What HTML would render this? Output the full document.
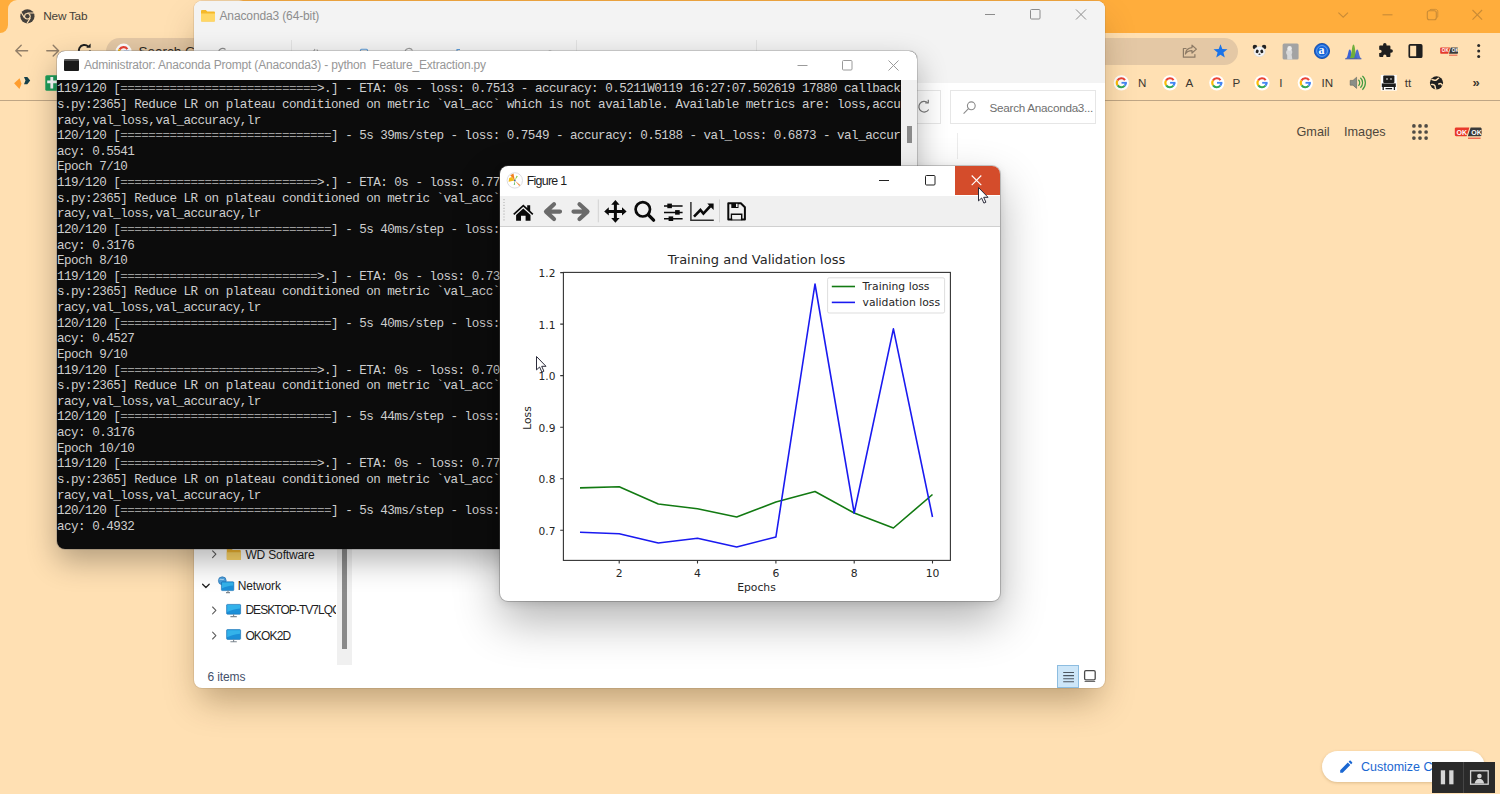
<!DOCTYPE html>
<html lang="en">
<head>
<meta charset="utf-8">
<title>New Tab</title>
<style>
*{box-sizing:border-box;margin:0;padding:0}
html,body{width:1500px;height:794px;overflow:hidden}
body{position:relative;background:#ffe0b3;font-family:"Liberation Sans",sans-serif;color:#222}
.abs{position:absolute}
.t{position:absolute;white-space:pre;line-height:1}
/* chrome */
#tabstrip{left:0;top:0;width:1500px;height:33px;background:#ffad3c}
#tab{left:8px;top:0;width:240px;height:33px;background:#ffe0b3;border-radius:9px 9px 0 0}
#toolbar{left:0;top:33px;width:1500px;height:68px;background:#ffe0b3}
#omni{left:106px;top:37.5px;width:1131.5px;height:27px;border-radius:13.5px;background:#e4c8a5}
#bmline{left:0;top:100px;width:1500px;height:1px;background:#bfa685}
.bm{font-size:11.600px;color:#3b3630}
.pg{font-size:12.7px;color:#4e473c}
/* explorer */
#exp{left:194px;top:1px;width:911px;height:687px;background:#fff;border-radius:8px;box-shadow:0 18px 34px -6px rgba(70,45,10,.36),0 0 0 1px rgba(150,120,80,.16);overflow:hidden}
#exphead{left:0;top:0;width:911px;height:82px;background:#f3f3f3}
.nav{font-size:12px;color:#1f1f1f;letter-spacing:-0.15px}
/* terminal */
#term{left:57px;top:51px;width:860px;height:498px;background:#0c0c0c;border-radius:8px;box-shadow:0 12px 30px rgba(0,0,0,.30),0 0 0 1px rgba(120,120,120,.28);overflow:hidden}
#termtitle{left:0;top:0;width:860px;height:29px;background:#fff}
#termscroll{left:844px;top:29px;width:16px;height:470px;background:#f0f0f0}
#termtext{left:0;top:31.3px;font-family:"Liberation Mono",monospace;font-size:12.6px;letter-spacing:-0.53px;line-height:15.62px;color:#cecece;white-space:pre}
.eq{color:#9c9c9c}
/* figure */
#fig{left:500px;top:166px;width:500px;height:435px;background:#fff;border-radius:8px;box-shadow:0 20px 46px rgba(0,0,0,.30),0 2px 8px rgba(0,0,0,.12),0 0 0 1px rgba(110,110,110,.32);overflow:hidden}
#figtool{left:0;top:29.500px;width:500px;height:31.500px;background:#f0f0f0;border-bottom:1px solid #d0d0d0}
#figclose{left:455px;top:0;width:45px;height:28.600px;background:#d44c2b}
</style>
</head>
<body>
<!-- CHROME -->
<div id="tabstrip" class="abs"></div>
<div id="tab" class="abs"></div>
<div class="abs" style="left:0;top:24px;width:9px;height:9px;background:#ffe0b3"></div><div class="abs" style="left:0;top:0;width:8px;height:33px;background:#ffad3c;border-radius:0 0 8px 0"></div>
<div id="toolbar" class="abs"></div>
<div id="omni" class="abs"></div>
<div id="bmline" class="abs"></div>
<div id="chrome-items">
<svg class="abs" style="left:0;top:0" width="1500" height="160" viewBox="0 0 1500 160" fill="none">
<g stroke="#c98b36" stroke-width="1.1"><path d="M1338.4 12.6l4.8 4.6 4.8-4.6"/><path d="M1382.5 14.8h10"/><rect x="1427.300" y="10.800" width="9" height="9" rx="2"/><path d="M1429.400 10.600c.2-.8.800-1.200 1.600-1.200h4.600c1.300 0 2.200.9 2.200 2.200v4.600c0 .800-.4 1.400-1.200 1.600" stroke-width=".9"/><path d="M1472.5 10l9.6 9.6M1482.1 10l-9.6 9.6"/></g>
<circle cx="27.4" cy="16.3" r="7.1" fill="#45413c"/><circle cx="27.4" cy="16.3" r="3.3" fill="#ffe0b3"/><circle cx="27.4" cy="16.3" r="2.2" fill="#45413c"/><path d="M27.4 13h6.6M24.5 17.9l-3.4-5.7M30.3 17.9l-3.3 5.5" stroke="#ffe0b3" stroke-width="1.1"/>
<g stroke="#927f69" stroke-width="1.4" stroke-linecap="round" stroke-linejoin="round"><path d="M27.6 50.7H16M21.2 45.3l-5.4 5.4 5.4 5.4"/><path d="M46.8 50.7h11.6M53.2 45.3l5.4 5.4-5.4 5.4"/></g>
<g stroke="#1f1f1f" stroke-width="2"><path d="M90 50.6a5.6 5.6 0 1 1-1.7-4"/><path d="M90.6 43.4v4.4h-4.4z" fill="#1f1f1f" stroke="none"/></g>
<circle cx="123.6" cy="51.6" r="8" fill="#fff"/><g transform="translate(0 .9)"><path d="M127.37 48.16A4.6 4.6 0 0 0 119.62 48.50" stroke="#ea4335" stroke-width="2.2" fill="none"/><path d="M119.62 48.50A4.6 4.6 0 0 0 119.83 53.44" stroke="#fbbc05" stroke-width="2.2" fill="none"/><path d="M119.83 53.44A4.6 4.6 0 0 0 127.12 53.76" stroke="#34a853" stroke-width="2.2" fill="none"/><path d="M127.12 53.76A4.6 4.6 0 0 0 128.20 50.80" stroke="#4285f4" stroke-width="2.2" fill="none"/><path d="M123.80 50.80H129.30" stroke="#4285f4" stroke-width="1.9" fill="none"/></g>
<g stroke="#8c7a65" stroke-width="1.2" stroke-linejoin="round" stroke-linecap="round"><path d="M1186 48.5h-2.6v8.7h11.5v-2.6"/><path d="M1192 45.2l4.4 3.9-4.4 3.9v-2.4c-3.4 0-5.4 1-6.6 3.4.3-3.8 2.4-6 6.6-6.4z"/></g>
<polygon points="1220.5,44.2 1222.3,49.1 1227.5,49.3 1223.4,52.6 1224.8,57.6 1220.5,54.7 1216.2,57.6 1217.6,52.6 1213.5,49.3 1218.7,49.1" fill="#1a73e8"/>
<g transform="translate(1259.500 51.400) scale(.860) translate(-1259.500 -51.400)"><circle cx="1254.2" cy="46.2" r="2.6" fill="#222"/><circle cx="1264.8" cy="46.2" r="2.6" fill="#222"/><ellipse cx="1259.5" cy="51.6" rx="6.6" ry="6" fill="#f4f4f4" stroke="#cfcfcf" stroke-width=".5"/><ellipse cx="1256.8" cy="51.4" rx="1.7" ry="2.1" fill="#222" transform="rotate(20 1256.8 51.4)"/><ellipse cx="1262.2" cy="51.4" rx="1.7" ry="2.1" fill="#222" transform="rotate(-20 1262.2 51.4)"/><ellipse cx="1259.5" cy="54.6" rx="1.2" ry=".8" fill="#222"/></g>
<rect x="1282.6" y="43.4" width="16" height="16" rx="1.5" fill="#a3a3a3"/><path d="M1287.2 59.4v-4.2c-1.4-1.6-1.6-4 .2-5.4.4-1.8 3-2 3.6-.2 1.6 1 1.6 3.4.6 4.8l.8 5z" fill="#d9d9d9"/><circle cx="1289.6" cy="48.4" r="2.3" fill="#ececec"/>
<circle cx="1322" cy="51" r="7.6" fill="#1565d8" stroke="#0b3f9c" stroke-width=".8"/><circle cx="1322" cy="51" r="5.4" fill="none" stroke="#8fb8f5" stroke-width=".7"/>
<path d="M1345.6 58.6c2.6-.4 2.4-9 4.2-9s1.6 8.600 4.200 9z" fill="#3b62d6"/><path d="M1349.300 58.600c2.400-.5 2.400-14 4.200-14s1.800 13.500 4.200 14z" fill="#6fae3c"/><path d="M1353.200 58.600c2.400-.4 2.200-9 4-9s1.800 8.600 4.400 9z" fill="#3b62d6" fill-opacity=".9"/><path d="M1345.200 58.800h16.200" stroke="#2c4aa8" stroke-width=".9"/>
<path transform="translate(1384.800 51) scale(.920) translate(-1385.200 -51.200)" d="M1383.300 44.400a1.900 1.900 0 0 1 3.800 0v.8h3.200c.6 0 1 .4 1 1v3.200h.8a1.900 1.900 0 0 1 0 3.800h-.8v3.500c0 .6-.4 1-1 1h-3.300v-.9a1.800 1.800 0 0 0-3.600 0v.9h-3.300c-.6 0-1-.4-1-1v-3.300h.9a1.800 1.800 0 0 0 0-3.600h-.9v-3.600c0-.6.4-1 1-1h3.200z" fill="#1f1f1f"/>
<rect x="1409.300" y="44.800" width="12.400" height="12.400" rx="1" stroke="#1f1f1f" stroke-width="1.700"/><rect x="1416.200" y="44.800" width="5.500" height="12.400" fill="#1f1f1f"/>
<path d="M1441.200 47.400h8.800l-1.800 6.400h-7c-.6 0-1-.4-1-1v-4.400c0-.6.400-1 1-1z" fill="#e53b2c"/><path d="M1450.800 47.400h6.200c.6 0 1 .4 1 1v4.400c0 .6-.4 1-1 1h-8z" fill="#3a3a3a"/><path d="M1449 55.200h8.400" stroke="#e53b2c" stroke-width=".8"/>
<circle cx="1478.700" cy="45.600" r="1.500" fill="#2a2a2a"/><circle cx="1478.700" cy="51" r="1.500" fill="#2a2a2a"/><circle cx="1478.700" cy="56.400" r="1.500" fill="#2a2a2a"/>
<path d="M14.100 83.300L19.600 78.200 21.500 83.800 19.400 88.900z" fill="#ff9d2e"/><path d="M24 76.900h3.300l2.900 3.700-2.900 3.700H24l1.500-3.700z" fill="#16414b"/>
<rect x="45.300" y="75.300" width="14" height="15.400" rx="1.500" fill="#1e9e5a"/><path d="M51.800 77v11.400M47.200 81.800h9.800" stroke="#fff" stroke-width="2.800"/>
<circle cx="1121.3" cy="82.8" r="7.6" fill="#fff"/><path d="M1124.99 80.22A4.5 4.5 0 0 0 1117.40 80.55" stroke="#ea4335" stroke-width="2.1" fill="none"/><path d="M1117.40 80.55A4.5 4.5 0 0 0 1117.61 85.38" stroke="#fbbc05" stroke-width="2.1" fill="none"/><path d="M1117.61 85.38A4.5 4.5 0 0 0 1124.75 85.69" stroke="#34a853" stroke-width="2.1" fill="none"/><path d="M1124.75 85.69A4.5 4.5 0 0 0 1125.80 82.80" stroke="#4285f4" stroke-width="2.1" fill="none"/><path d="M1121.50 82.80H1126.85" stroke="#4285f4" stroke-width="1.8" fill="none"/>
<circle cx="1169.9" cy="82.8" r="7.6" fill="#fff"/><path d="M1173.59 80.22A4.5 4.5 0 0 0 1166.00 80.55" stroke="#ea4335" stroke-width="2.1" fill="none"/><path d="M1166.00 80.55A4.5 4.5 0 0 0 1166.21 85.38" stroke="#fbbc05" stroke-width="2.1" fill="none"/><path d="M1166.21 85.38A4.5 4.5 0 0 0 1173.35 85.69" stroke="#34a853" stroke-width="2.1" fill="none"/><path d="M1173.35 85.69A4.5 4.5 0 0 0 1174.40 82.80" stroke="#4285f4" stroke-width="2.1" fill="none"/><path d="M1170.10 82.80H1175.45" stroke="#4285f4" stroke-width="1.8" fill="none"/>
<circle cx="1216.8" cy="82.8" r="7.6" fill="#fff"/><path d="M1220.49 80.22A4.5 4.5 0 0 0 1212.90 80.55" stroke="#ea4335" stroke-width="2.1" fill="none"/><path d="M1212.90 80.55A4.5 4.5 0 0 0 1213.11 85.38" stroke="#fbbc05" stroke-width="2.1" fill="none"/><path d="M1213.11 85.38A4.5 4.5 0 0 0 1220.25 85.69" stroke="#34a853" stroke-width="2.1" fill="none"/><path d="M1220.25 85.69A4.5 4.5 0 0 0 1221.30 82.80" stroke="#4285f4" stroke-width="2.1" fill="none"/><path d="M1217.00 82.80H1222.35" stroke="#4285f4" stroke-width="1.8" fill="none"/>
<circle cx="1262" cy="82.8" r="7.6" fill="#fff"/><path d="M1265.69 80.22A4.5 4.5 0 0 0 1258.10 80.55" stroke="#ea4335" stroke-width="2.1" fill="none"/><path d="M1258.10 80.55A4.5 4.5 0 0 0 1258.31 85.38" stroke="#fbbc05" stroke-width="2.1" fill="none"/><path d="M1258.31 85.38A4.5 4.5 0 0 0 1265.45 85.69" stroke="#34a853" stroke-width="2.1" fill="none"/><path d="M1265.45 85.69A4.5 4.5 0 0 0 1266.50 82.80" stroke="#4285f4" stroke-width="2.1" fill="none"/><path d="M1262.20 82.80H1267.55" stroke="#4285f4" stroke-width="1.8" fill="none"/>
<circle cx="1305.3" cy="82.8" r="7.6" fill="#fff"/><path d="M1308.99 80.22A4.5 4.5 0 0 0 1301.40 80.55" stroke="#ea4335" stroke-width="2.1" fill="none"/><path d="M1301.40 80.55A4.5 4.5 0 0 0 1301.61 85.38" stroke="#fbbc05" stroke-width="2.1" fill="none"/><path d="M1301.61 85.38A4.5 4.5 0 0 0 1308.75 85.69" stroke="#34a853" stroke-width="2.1" fill="none"/><path d="M1308.75 85.69A4.5 4.5 0 0 0 1309.80 82.80" stroke="#4285f4" stroke-width="2.1" fill="none"/><path d="M1305.50 82.80H1310.85" stroke="#4285f4" stroke-width="1.8" fill="none"/>
<path d="M1350.200 80.400h2.800l3.600-3.200v11.200l-3.600-3.200h-2.800z" fill="#8a8f88" stroke="#5d625c" stroke-width=".6"/><g stroke="#3f9a3f" stroke-width="1.200"><path d="M1358.400 79.800a4 4 0 0 1 0 6"/><path d="M1360.400 77.800a6.800 6.800 0 0 1 0 10"/><path d="M1362.400 75.900a9.500 9.500 0 0 1 0 13.800"/></g>
<rect x="1380.800" y="75" width="16" height="15.600" fill="#fff"/><rect x="1383.200" y="75.600" width="11.200" height="7.400" rx="1" fill="#1d1d1d"/><path d="M1386 79h2M1390 79h2" stroke="#fff" stroke-width=".9"/><path d="M1381.800 83.400h14v3.600h-14z" fill="#1d1d1d"/><path d="M1383.200 87v3M1394.400 87v3M1385.500 88.600h6.600" stroke="#1d1d1d" stroke-width="1.300"/>
<circle cx="1436.500" cy="82.800" r="6.600" fill="#1f1f1f"/><path d="M1432 79.600c1.600.2 2.400 1 3.800.6 1.400-.4 1.400-1.800 2.800-2M1431.600 84.400c1.400.4 2.400 0 3.200 1.200.8 1.200 0 2.600 1 3.400M1438.800 84c1-.6 2.600-.2 3.400 1" stroke="#ffe0b3" stroke-width="1.500" stroke-linecap="round"/>
<circle cx="1413.9" cy="125.9" r="1.85" fill="#4f4b45"/><circle cx="1413.9" cy="132.0" r="1.85" fill="#4f4b45"/><circle cx="1413.9" cy="138.1" r="1.85" fill="#4f4b45"/><circle cx="1420.0" cy="125.9" r="1.85" fill="#4f4b45"/><circle cx="1420.0" cy="132.0" r="1.85" fill="#4f4b45"/><circle cx="1420.0" cy="138.1" r="1.85" fill="#4f4b45"/><circle cx="1426.1" cy="125.9" r="1.85" fill="#4f4b45"/><circle cx="1426.1" cy="132.0" r="1.85" fill="#4f4b45"/><circle cx="1426.1" cy="138.1" r="1.85" fill="#4f4b45"/>
<path d="M1456.200 127.400h13.200l-2.800 8.800h-10.400c-.8 0-1.400-.6-1.400-1.400v-6c0-.8.600-1.400 1.400-1.400z" fill="#e8392b"/><path d="M1470.600 127.400h9.600c.8 0 1.400.6 1.400 1.400v6c0 .8-.6 1.400-1.400 1.400h-12.400z" fill="#3a3a3a"/><path d="M1468 138.200h12.600" stroke="#e8392b" stroke-width="1"/>
</svg>
<div class="t" id="tabtt" style="left:43.300px;top:10.800px;font-size:11.8px;color:#453f38;letter-spacing:-0.25px">New Tab</div>
<div class="t" style="left:138.500px;top:44.700px;font-size:13.500px;color:#2b2621">Search Google or type a URL</div>
<div class="t" style="left:1318.600px;top:43.600px;font-family:'Liberation Serif',serif;font-weight:bold;font-size:12px;color:#fff">a</div>
<div class="t" style="left:1441.700px;top:48.500px;font-size:4.500px;font-weight:bold;color:#fff;letter-spacing:.2px">OK  OK</div>
<div class="t" style="left:1456.500px;top:128.500px;font-size:7px;font-weight:bold;color:#fff;letter-spacing:.1px">OK  OK</div>
<div class="t bm" style="left:1138px;top:77px">N</div>
<div class="t bm" style="left:1185.4px;top:77px">A</div>
<div class="t bm" style="left:1232.4px;top:77px">P</div>
<div class="t bm" style="left:1279.2px;top:77px">I</div>
<div class="t bm" style="left:1321.6px;top:77px">IN</div>
<div class="t bm" style="left:1404.8px;top:77px">tt</div>
<div class="t" style="left:1472.500px;top:75.500px;font-size:13px;font-weight:bold;color:#3b3630">»</div>
<div class="t pg" id="gmail" style="left:1296.500px;top:125.500px">Gmail</div><div class="t pg" id="images" style="left:1344px;top:125.500px">Images</div>
<div class="abs" style="left:1322px;top:751px;width:163px;height:31px;border-radius:15.500px;background:#fff;box-shadow:0 1px 3px rgba(120,80,20,.25)"></div>
<svg class="abs" style="left:1338px;top:759px" width="16" height="16" viewBox="0 0 16 16"><path d="M2.200 11.200l7.600-7.600 2.500 2.500-7.600 7.600H2.200zM10.600 2.800l1-1c.3-.3.800-.3 1.100 0l1.400 1.400c.3.300.3.800 0 1.100l-1 1z" fill="#1a67d2"/></svg>
<div class="t" id="cust" style="left:1361px;top:760.500px;font-size:12.500px;color:#1a67d2">Customize Chrome</div>
<div class="abs" style="left:1432px;top:762px;width:63px;height:31px;background:#2a2a2a"></div><div class="abs" style="left:1463px;top:762px;width:1px;height:31px;background:#454545"></div>
<svg class="abs" style="left:1432px;top:762px" width="63" height="31" viewBox="1432 762 63 31"><rect x="1440.800" y="770.300" width="4.300" height="14" fill="#d6d6d6"/><rect x="1449.200" y="770.300" width="4.300" height="14" fill="#d6d6d6"/><rect x="1470.600" y="770.800" width="17.600" height="13.400" fill="none" stroke="#d6d6d6" stroke-width="1.300"/><circle cx="1479.400" cy="776" r="2.300" fill="#d6d6d6"/><path d="M1474.600 783.600c.6-3.200 2.400-4.800 4.800-4.800s4.200 1.600 4.800 4.800z" fill="#d6d6d6"/></svg>
</div>
<!-- EXPLORER -->
<div id="exp" class="abs">
<div id="exphead" class="abs"></div>
<div class="abs" style="left:-194px;top:-1px;width:1500px;height:794px">
<!-- title -->
<svg class="abs" style="left:200px;top:8.600px" width="16" height="14" viewBox="0 0 16 14"><path d="M1 2.2c0-.7.5-1.2 1.2-1.2h3.6l1.5 1.6h6.5c.7 0 1.2.5 1.2 1.2v7.6c0 .7-.5 1.2-1.2 1.2H2.2c-.7 0-1.2-.5-1.2-1.2z" fill="#f5b92a"/><path d="M1 4.6h14v6.8c0 .7-.5 1.2-1.2 1.2H2.2c-.7 0-1.2-.5-1.2-1.2z" fill="#ffd766"/></svg>
<div class="t" id="exptt" style="left:219.5px;top:10px;font-size:12px;color:#8d8d8d;letter-spacing:-0.13px">Anaconda3 (64-bit)</div>
<svg class="abs" style="left:975px;top:.4px" width="130" height="29" viewBox="0 0 130 29" fill="none" stroke="#8c8c8c" stroke-width="1"><path d="M10 14.5h10"/><rect x="55.5" y="9.5" width="9.5" height="9.5" rx="1"/><path d="M101 9.5l10 10M111 9.5l-10 10"/></svg>
<svg class="abs" style="left:194px;top:44px" width="720" height="8" viewBox="194 44 720 8" fill="none" stroke-width="1.1"><path d="M218.500 52a4.200 4.200 0 0 1 7 -2.500" stroke="#8a8a8a"/><path d="M313.500 51.500l1.500-2.500M318 51.500l-1.200-2" stroke="#9a9a9a"/><rect x="360.500" y="49.300" width="7" height="5" rx="1" stroke="#5b9bd8"/><path d="M405 52a4 4 0 0 1 7.500-1.500" stroke="#9a9a9a"/><path d="M457 51.500v-2h3" stroke="#5b9bd8"/><path d="M548 52a2.500 2.500 0 0 1 4 0" stroke="#9a9a9a"/></svg>
<!-- cmd bar hints -->
<div class="abs" style="left:291px;top:40px;width:1px;height:12px;background:#e2e2e2"></div>
<div class="abs" style="left:576px;top:40px;width:1px;height:12px;background:#e2e2e2"></div>
<div class="abs" style="left:756px;top:40px;width:1px;height:12px;background:#e2e2e2"></div>
<!-- address row right -->
<div class="abs" style="left:900px;top:90px;width:41px;height:34px;border:1px solid #e6e6e6;background:#fff"></div>
<svg class="abs" style="left:914.500px;top:97.300px" width="22" height="20" viewBox="916 97 22 20" fill="none" stroke="#7a7a7a" stroke-width="1.2"><path d="M928.8 102.9a5.3 5.3 0 1 0 .9 6.6"/><path d="M926.2 102.9h3.1v-3.2" stroke-linejoin="round"/></svg>
<div class="abs" style="left:950px;top:90px;width:146px;height:34px;border:1px solid #e6e6e6;background:#fff"></div>
<svg class="abs" style="left:962px;top:100px" width="16" height="16" viewBox="0 0 16 16" fill="none" stroke="#8a8a8a" stroke-width="1.1"><circle cx="9.3" cy="5.8" r="3.9"/><path d="M6.5 8.7L1.6 13.6"/></svg>
<div class="t" id="expsearch" style="left:989.5px;top:102px;font-size:11.7px;color:#6f6f6f;letter-spacing:-0.26px">Search Anaconda3...</div>
<div class="abs" style="left:957px;top:133px;width:1px;height:26px;background:#ececec"></div>
<!-- nav pane -->
<div class="abs" style="left:337px;top:540px;width:15px;height:125px;background:#f0f0f0"></div>
<div class="abs" style="left:341.5px;top:540px;width:5.5px;height:108.5px;background:#8a8a8a"></div>
<svg class="abs" style="left:200px;top:545px" width="50" height="100" viewBox="200 545 50 100" fill="none">
<g stroke="#5f5f5f" stroke-width="1.1" stroke-linecap="round" stroke-linejoin="round"><path d="M212.6 550.8l3.3 3.4-3.3 3.4"/><path d="M202.6 584.2l3.3 3.3 3.3-3.3" stroke="#222" stroke-width="1.3"/><path d="M212.6 607l3.3 3.4-3.3 3.4"/><path d="M212.6 632.2l3.3 3.4-3.3 3.4"/></g>
<path d="M226.8 549.5c0-.6.4-1 1-1h3.6l1.4 1.5h7c.6 0 1 .4 1 1v8c0 .6-.4 1-1 1h-12c-.6 0-1-.4-1-1z" fill="#f2b630"/><path d="M226.8 552.3h14v6.7c0 .6-.4 1-1 1h-12c-.6 0-1-.4-1-1z" fill="#ffd869"/>
<!-- network icon -->
<circle cx="222.300" cy="580.700" r="3.900" fill="#4a9fdc" stroke="#2f79b8" stroke-width=".7"/><path d="M219.600 579.600c1.400-.8 2.800.5 4.200-.3" stroke="#d6ecfb" stroke-width=".8"/>
<rect x="221.400" y="581.800" width="12.400" height="8.800" rx=".8" fill="#1b8fd8" stroke="#1670b4" stroke-width=".6"/><path d="M222 582.400h11.200v3c-4.400.300-7.800 1.300-11.200 2.800z" fill="#33b2ea"/><path d="M226 592.6h4M228 590.4v2.2" stroke="#7d8790" stroke-width="1.1"/>
<!-- pc icons -->
<rect x="226.6" y="604.4" width="14" height="9.8" rx=".8" fill="#1b8fd8" stroke="#1670b4" stroke-width=".6"/><path d="M227.2 605h12.800v3.600c-5 .400-9 1.600-12.800 3.400z" fill="#33b2ea"/><path d="M230.4 616.6h6.4M233.6 614.2v2.4" stroke="#7d8790" stroke-width="1.1"/>
<rect x="226.6" y="629.6" width="14" height="9.8" rx=".8" fill="#1b8fd8" stroke="#1670b4" stroke-width=".6"/><path d="M227.2 630.2h12.800v3.600c-5 .400-9 1.600-12.800 3.400z" fill="#33b2ea"/><path d="M230.4 641.8h6.4M233.6 639.4v2.4" stroke="#7d8790" stroke-width="1.1"/>
</svg>
<div class="t nav" id="nav1" style="left:245.4px;top:548.5px">WD Software</div>
<div class="t nav" id="nav2" style="left:237.8px;top:579.6px">Network</div>
<div class="abs" style="left:245.4px;top:600px;width:90.4px;height:20px;overflow:hidden"><div class="t nav" id="nav3" style="left:0;top:4.4px;letter-spacing:-0.95px">DESKTOP-TV7LQ<span id="nav3c">C</span></div></div>
<div class="t nav" id="nav4" style="left:245.4px;top:629.8px;letter-spacing:-0.85px">OKOK2D</div>
<div class="t" id="items" style="left:207.4px;top:670.6px;font-size:12px;color:#44506a;letter-spacing:-0.1px">6 items</div>
<!-- view buttons -->
<div class="abs" style="left:1057px;top:665px;width:22px;height:23px;background:#cde6f8;border:1px solid #8dbde0"></div>
<svg class="abs" style="left:1057px;top:665px" width="45" height="23" viewBox="1057 665 45 23" fill="none"><path d="M1063.2 672.5h10.8M1063.2 675.6h10.8M1063.2 678.7h10.8M1063.2 681.8h10.8" stroke="#4c5660" stroke-width="1.1"/><rect x="1084.6" y="670.6" width="10.6" height="9.2" rx="1.3" stroke="#4a4a4a" stroke-width="1.3"/><path d="M1084.6 681.5h10.6" stroke="#6a6a6a" stroke-width="1"/></svg>
</div>
</div>
<!-- TERMINAL -->
<div id="term" class="abs">
<div id="termtitle" class="abs">
<div class="abs" style="left:7px;top:8px;width:15px;height:11.5px;background:#1a1a1a;border-radius:1px;border-top:2px solid #555"></div>
<div class="t" id="termtt" style="left:27px;top:8px;font-size:12px;color:#979797;letter-spacing:-0.185px">Administrator: Anaconda Prompt (Anaconda3) - python  Feature_Extraction.py</div>
<svg class="abs" style="left:730px;top:0" width="130" height="29" viewBox="0 0 130 29" fill="none" stroke="#9a9a9a" stroke-width="1"><path d="M10.500 14.500h10"/><rect x="55.500" y="9.500" width="9.500" height="9.500" rx="1"/><path d="M101.500 9.500l10 10M111.500 9.500l-10 10"/></svg>
</div>
<div id="termscroll" class="abs"><div class="abs" style="left:6px;top:46px;width:5px;height:17px;background:#8a8a8a"></div></div>
<div id="termtext" class="abs">119/120 [<span class="eq">============================</span>>.] - ETA: 0s - loss: 0.7513 - accuracy: 0.5211W0119 16:27:07.502619 17880 callback
s.py:2365] Reduce LR on plateau conditioned on metric `val_acc` which is not available. Available metrics are: loss,accu
racy,val_loss,val_accuracy,lr
120/120 [<span class="eq">==============================</span>] - 5s 39ms/step - loss: 0.7549 - accuracy: 0.5188 - val_loss: 0.6873 - val_accur
acy: 0.5541
Epoch 7/10
119/120 [<span class="eq">============================</span>>.] - ETA: 0s - loss: 0.7712 - accuracy: 0.5096W0119 16:27:12.318840 17880 callback
s.py:2365] Reduce LR on plateau conditioned on metric `val_acc` which is not available. Available metrics are: loss,accu
racy,val_loss,val_accuracy,lr
120/120 [<span class="eq">==============================</span>] - 5s 40ms/step - loss: 0.7748 - accuracy: 0.5094 - val_loss: 1.1779 - val_accur
acy: 0.3176
Epoch 8/10
119/120 [<span class="eq">============================</span>>.] - ETA: 0s - loss: 0.7325 - accuracy: 0.5373W0119 16:27:17.146071 17880 callback
s.py:2365] Reduce LR on plateau conditioned on metric `val_acc` which is not available. Available metrics are: loss,accu
racy,val_loss,val_accuracy,lr
120/120 [<span class="eq">==============================</span>] - 5s 40ms/step - loss: 0.7330 - accuracy: 0.5375 - val_loss: 0.7329 - val_accur
acy: 0.4527
Epoch 9/10
119/120 [<span class="eq">============================</span>>.] - ETA: 0s - loss: 0.7036 - accuracy: 0.5509W0119 16:27:22.409530 17880 callback
s.py:2365] Reduce LR on plateau conditioned on metric `val_acc` which is not available. Available metrics are: loss,accu
racy,val_loss,val_accuracy,lr
120/120 [<span class="eq">==============================</span>] - 5s 44ms/step - loss: 0.7031 - accuracy: 0.5510 - val_loss: 1.0906 - val_accur
acy: 0.3176
Epoch 10/10
119/120 [<span class="eq">============================</span>>.] - ETA: 0s - loss: 0.7701 - accuracy: 0.5180W0119 16:27:27.601284 17880 callback
s.py:2365] Reduce LR on plateau conditioned on metric `val_acc` which is not available. Available metrics are: loss,accu
racy,val_loss,val_accuracy,lr
120/120 [<span class="eq">==============================</span>] - 5s 43ms/step - loss: 0.7690 - accuracy: 0.5188 - val_loss: 0.7251 - val_accur
acy: 0.4932</div>
</div>
<!-- FIGURE -->
<div id="fig" class="abs">
<svg class="abs" id="figicon" style="left:5px;top:5px" width="20" height="20" viewBox="505 171 20 20"><circle cx="514.8" cy="180.4" r="7.7" fill="#fff" stroke="#d9d9de" stroke-width="0.9"/><path d="M514.8 180.4l-4.6-5.2 3.3-1.6z" fill="#f08020"/><path d="M514.8 180.4l-6.2 1.3 .6-3.6 2.4-1.2z" fill="#f4bc18"/><path d="M514.8 180.4l1.6-4.6 1.5 .5z" fill="#8ccf4a"/><path d="M514.8 180.4l.3 4.4-1.4 .1z" fill="#6cc26a"/><path d="M514.8 180.4l5.4 4.6-.9 1z" fill="#f08a3a"/><circle cx="514.8" cy="180.4" r="0.9" fill="#4a6a9a"/></svg>
<div class="t" id="figtt" style="left:26.7px;top:8.6px;font-size:12.4px;letter-spacing:-0.72px;color:#1c1c1c">Figure 1</div>
<div id="figtool" class="abs"></div>
<svg class="abs" style="left:0;top:30px" width="500" height="31" viewBox="500 196 500 31">
<path d="M504 199v23" stroke="#b8b8b8" stroke-width="1.2" stroke-dasharray="1.2 1.7" fill="none"/>
<path d="M598.3 199.5v22.8M719.5 199.5v22.8" stroke="#d2d2d2" stroke-width="1" fill="none"/>
<!-- home -->
<g fill="#0a0a0a"><path d="M523.3 204.6l3.9 3.5v-2.9h3v5.6l3.2 2.9-1.1 1.2-9-8.1-9 8.1-1.1-1.2z"/><path d="M523.3 208.4l7.2 6.5v5.9h-4.9v-5h-4.6v5h-4.9v-5.9z"/></g>
<!-- back / forward -->
<g fill="none" stroke="#6b6b6b" stroke-width="4.2" stroke-linecap="round" stroke-linejoin="round"><path d="M554 204.2l-8 7.4 8 7.4M547 211.6h13"/><path d="M579.5 204.2l8 7.4-8 7.4M586.5 211.6h-13"/></g>
<!-- move -->
<g fill="#0a0a0a"><path d="M613.900 203.800h3v6.100h6.100v3h-6.100v6.100h-3v-6.100h-6.100v-3h6.100z"/><path d="M615.4 200.1l4.2 4.6h-8.4zM615.4 222.7l4.2-4.6h-8.4zM604.2 211.4l4.6-4.2v8.4zM626.6 211.4l-4.6-4.2v8.4z"/></g>
<!-- zoom -->
<g fill="none" stroke="#0a0a0a" stroke-linecap="round"><circle cx="642.8" cy="209.3" r="7.2" stroke-width="2.7"/><path d="M648.6 215.2l5 5" stroke-width="3.3"/></g>
<!-- sliders -->
<g stroke="#0a0a0a" stroke-width="1.5" fill="#0a0a0a"><path d="M664 205.9h18.6M664 212.4h18.6M664 218.7h18.6" fill="none"/><rect x="667.3" y="203.6" width="4.6" height="4.6" stroke="none"/><rect x="675.1" y="210.1" width="4.6" height="4.6" stroke="none"/><rect x="668.6" y="216.4" width="4.6" height="4.6" stroke="none"/></g>
<!-- chart -->
<g fill="none" stroke="#0a0a0a"><path d="M690.9 202v18.3h22.9" stroke-width="1.5" stroke="#333"/><path d="M694 216.6l6.4-6.6 3 3.6 7-7.6" stroke-width="2.6" stroke-linejoin="miter"/><path d="M707.3 203.6h6.3v6.3z" fill="#0a0a0a" stroke="none"/></g>
<!-- save -->
<g fill="none" stroke="#0a0a0a"><path d="M728.3 203.2h12.5l4.1 4.1v12.3h-16.6z" stroke-width="2" stroke-linejoin="round"/><path d="M731.3 203v5h7.2v-5z" fill="#0a0a0a" stroke="none"/><rect x="736" y="203.8" width="1.6" height="3.2" fill="#f0f0f0" stroke="none"/><path d="M731.500 220.300v-6.100h10.200v6.100" stroke-width="1.500"/><rect x="732.300" y="215" width="8.600" height="4.500" fill="#f0f0f0" stroke="none"/></g>
</svg>
<div id="figclose" class="abs"></div>
<svg class="abs" style="left:370px;top:0" width="130" height="29" viewBox="0 0 130 29" fill="none" stroke="#222" stroke-width="1"><path d="M9 14.5h10"/><rect x="55.5" y="9.5" width="9.5" height="9.5" rx="1"/><path d="M101.700 9.500l9.600 9.600M111.300 9.500l-9.600 9.600" stroke="#fff" stroke-width="1.100"/></svg>
<svg class="abs" style="left:0;top:61px" width="500" height="374" viewBox="500 227 500 374" font-family="'DejaVu Sans',sans-serif" font-size="10.8" fill="#262626">
<rect x="563.4" y="272.4" width="387.0" height="288.0" fill="#fff" stroke="#333" stroke-width="1.1"/>
<path d="M560.1999999999999 530.2H563.4M560.1999999999999 478.7H563.4M560.1999999999999 427.2H563.4M560.1999999999999 375.6H563.4M560.1999999999999 324.1H563.4M560.1999999999999 272.6H563.4M619.2 560.4V563.6M697.5 560.4V563.6M775.9 560.4V563.6M854.2 560.4V563.6M932.5 560.4V563.6" stroke="#333" stroke-width="1.1" fill="none"/>
<text x="555.4" y="534.1" text-anchor="end" font-size="10.6" dy=".7">0.7</text>
<text x="555.4" y="482.6" text-anchor="end" font-size="10.6" dy=".7">0.8</text>
<text x="555.4" y="431.1" text-anchor="end" font-size="10.6" dy=".7">0.9</text>
<text x="555.4" y="379.5" text-anchor="end" font-size="10.6" dy=".7">1.0</text>
<text x="555.4" y="328.0" text-anchor="end" font-size="10.6" dy=".7">1.1</text>
<text x="555.4" y="276.5" text-anchor="end" font-size="10.6" dy=".7">1.2</text>
<text x="619.2" y="576.6" text-anchor="middle">2</text>
<text x="697.5" y="576.6" text-anchor="middle">4</text>
<text x="775.9" y="576.6" text-anchor="middle">6</text>
<text x="854.2" y="576.6" text-anchor="middle">8</text>
<text x="932.5" y="576.6" text-anchor="middle">10</text>
<text x="756.5" y="263.9" text-anchor="middle" font-size="13">Training and Validation loss</text>
<text x="756.5" y="591" text-anchor="middle">Epochs</text>
<text transform="translate(531 418) rotate(-90)" text-anchor="middle">Loss</text>
<polyline points="580.0,487.9 619.2,486.7 658.3,504.0 697.5,508.8 736.7,517.0 775.9,502.0 815.0,491.5 854.2,513.0 893.4,528.0 932.5,494.5" fill="none" stroke="#127a12" stroke-width="1.6" stroke-linejoin="round"/>
<polyline points="580.0,532.2 619.2,533.8 658.3,543.0 697.5,538.2 736.7,547.0 775.9,537.0 815.0,284.0 854.2,513.0 893.4,328.9 932.5,517.0" fill="none" stroke="#1a1af0" stroke-width="1.6" stroke-linejoin="round"/>
<rect x="827.6" y="277.8" width="117" height="35.2" rx="1.6" fill="#fff" fill-opacity=".8" stroke="#d4d4d4" stroke-width="0.8"/>
<path d="M831.8 286.5H855" stroke="#127a12" stroke-width="1.6"/><path d="M831.8 302.4H855" stroke="#1a1af0" stroke-width="1.6"/>
<text x="862.6" y="290.3">Training loss</text><text x="862.6" y="306.2">validation loss</text>
</svg>
</div>
<svg class="abs" style="left:535px;top:355px;z-index:50" width="14" height="20" viewBox="-1.5 -1.5 14 20"><path d="M0 0V13.4L3.1 10.5 5.4 15.6 7.400 14.700 5.200 9.800H9.500Z" fill="#fff" stroke="#2b2b3a" stroke-width="1" stroke-linejoin="round"/></svg>
<svg class="abs" style="left:977px;top:186px;z-index:50" width="14" height="20" viewBox="-1.5 -1.5 14 20"><path d="M0 0V13.4L3.1 10.5 5.4 15.6 7.400 14.700 5.200 9.800H9.500Z" fill="#fff" stroke="#2b2b3a" stroke-width="1" stroke-linejoin="round"/></svg>
</body>
</html>
